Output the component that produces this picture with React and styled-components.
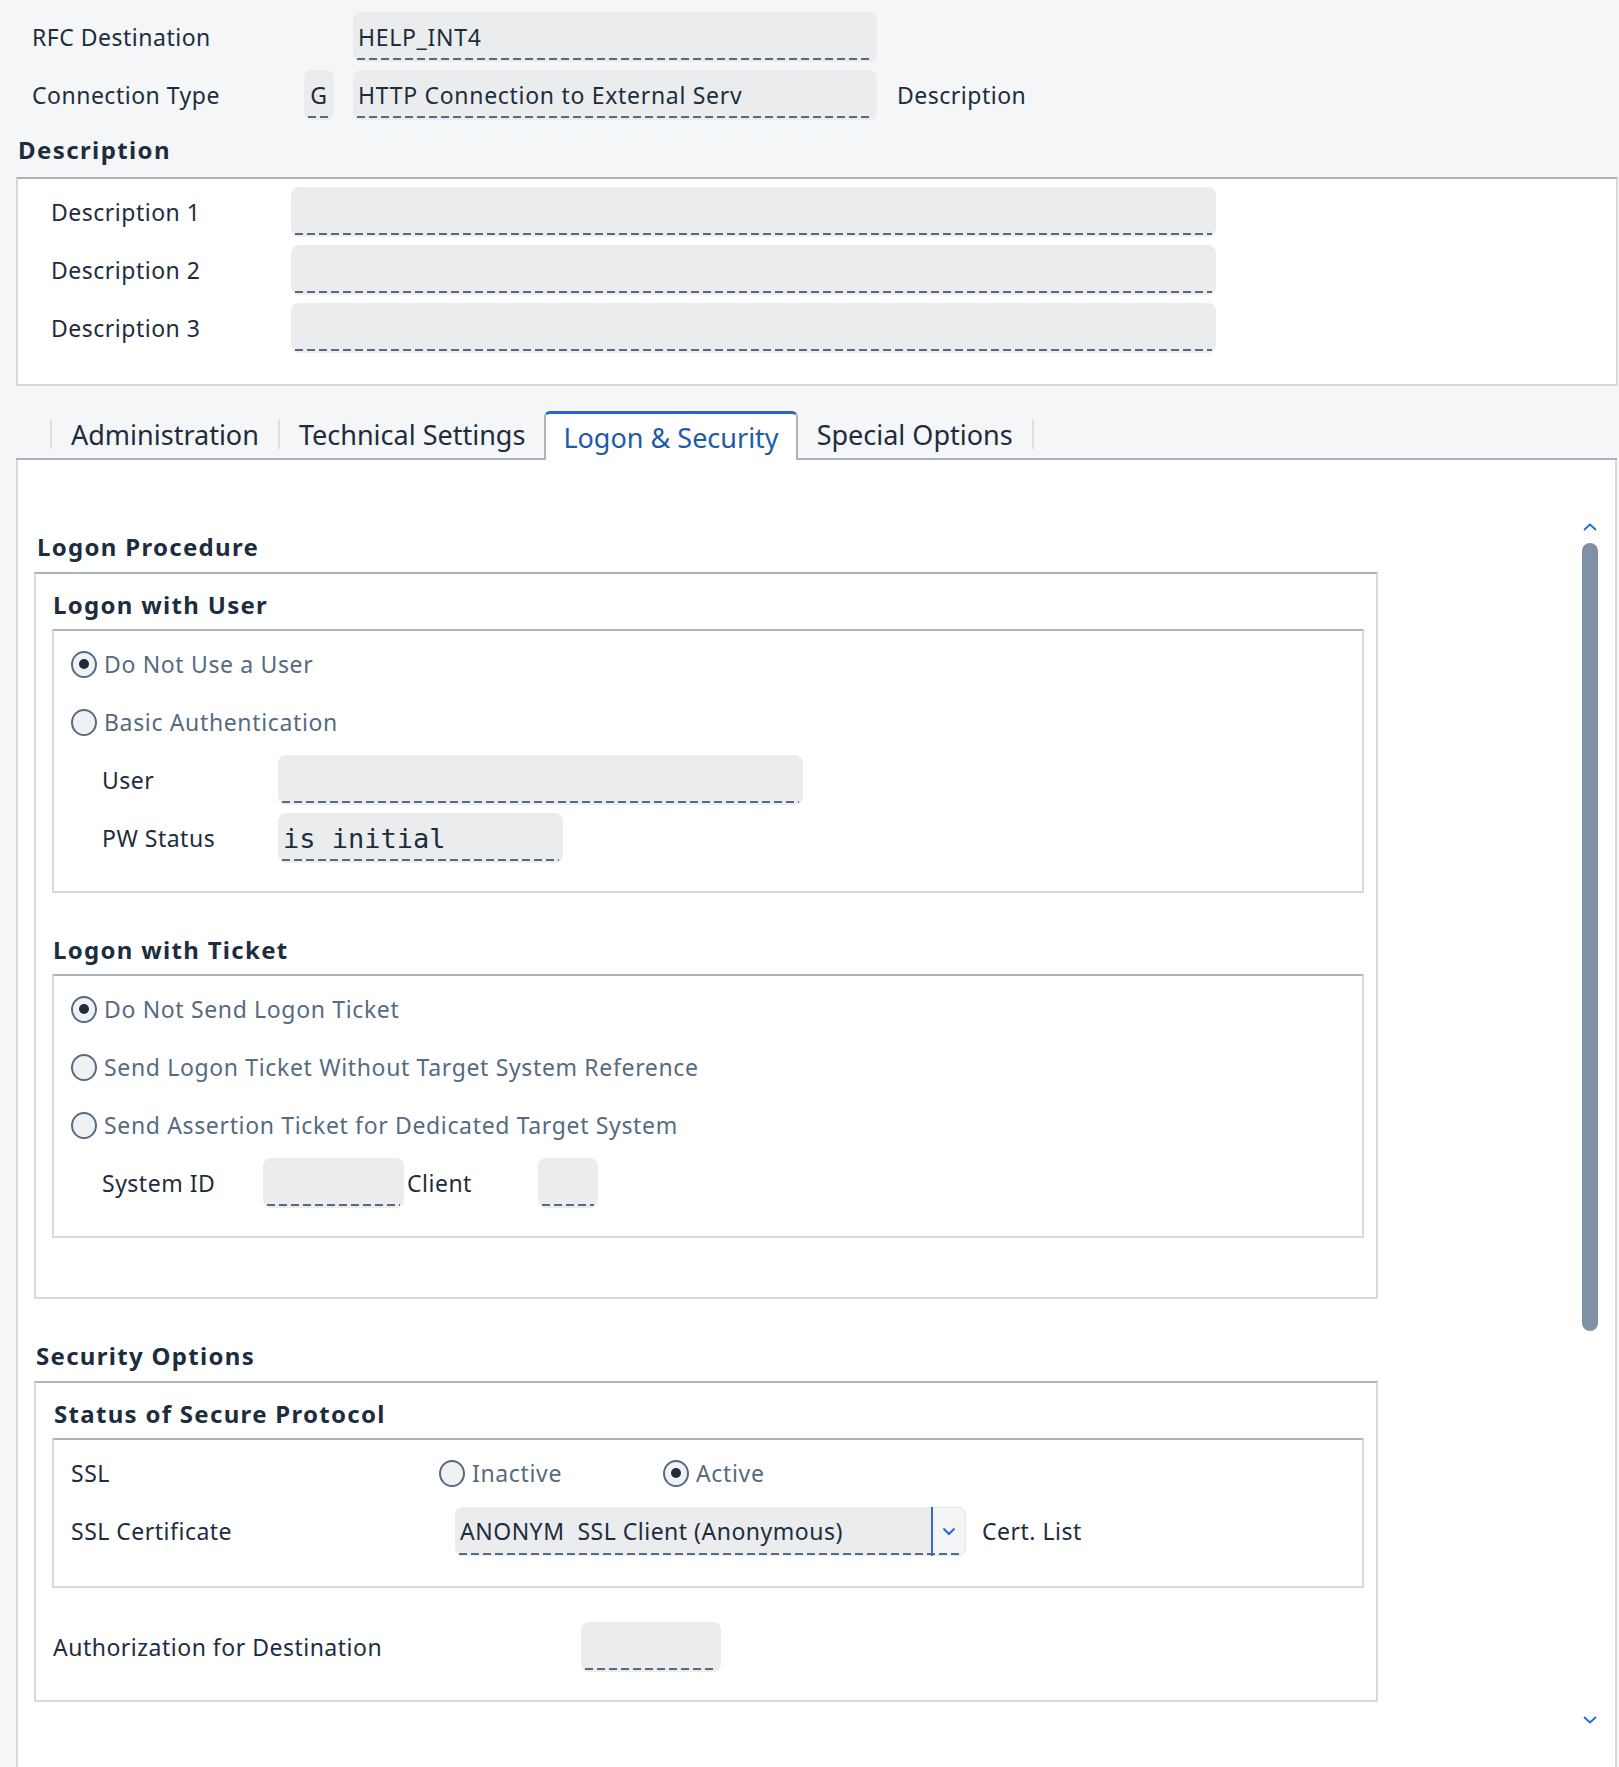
import React from 'react';
import styled, { createGlobalStyle } from 'styled-components';

const GlobalStyle = createGlobalStyle`
  body {
    margin: 0;
    background: #f5f6f7;
    font-family: "Noto Sans", "Open Sans", sans-serif;
    color: #1d2d3e;
  }
`;

const Page = styled.div`
  width: 1619px;
  min-height: 1767px;
  display: flex;
  flex-direction: column;
  box-sizing: border-box;
  padding-top: 12px;
`;

const HeaderRows = styled.div`
  display: flex;
  flex-direction: column;
  gap: 8px;
  padding-left: 32px;
`;

const Row = styled.div`
  display: flex;
  align-items: center;
  height: 50px;
  padding-left: ${p => p.$indent || 0}px;
`;

const Label = styled.div`
  width: ${p => p.$w}px;
  flex-shrink: 0;
  font-size: 23px;
  letter-spacing: 0.5px;
  white-space: nowrap;
`;

const Field = styled.div`
  position: relative;
  box-sizing: border-box;
  width: ${p => p.$w}px;
  height: ${p => p.$h || 50}px;
  flex-shrink: 0;
  background: #eaecee;
  border-radius: 8px;
  padding: 0 ${p => (p.$center ? 0 : 5)}px;
  display: flex;
  align-items: center;
  justify-content: ${p => (p.$center ? 'center' : 'flex-start')};
  font-family: ${p =>
    p.$mono ? '"DejaVu Sans Mono", "Liberation Mono", monospace' : 'inherit'};
  font-size: ${p => (p.$mono ? 27 : 23)}px;
  letter-spacing: ${p => (p.$mono ? 0 : 0.7)}px;
  white-space: pre;
  color: #1d2d3e;

  &::after {
    content: '';
    position: absolute;
    left: 4px;
    right: 4px;
    bottom: 2px;
    height: 2px;
    background: repeating-linear-gradient(
      to right,
      #556b82 0 8px,
      transparent 8px 12px
    );
  }
`;

const GSlot = styled.div`
  width: 30px;
  margin-right: 19px;
  flex-shrink: 0;
`;

const After = styled.div`
  margin-left: ${p => p.$ml || 20}px;
  font-size: 23px;
  letter-spacing: 0.5px;
`;

const SectionTitle = styled.div`
  height: 52px;
  margin-top: 3px;
  padding-left: 18px;
  display: flex;
  align-items: center;
  font-size: 24px;
  font-weight: 700;
  letter-spacing: 1.4px;
`;

const DescPanel = styled.div`
  margin: 2px 1px 0 16px;
  background: #fff;
  border: 2px solid #d9d9d9;
  border-top-color: #a9b4be;
  padding: 8px 0 31px 33px;
  display: flex;
  flex-direction: column;
  gap: 8px;
`;

const TabStrip = styled.div`
  margin: 25px 2px 0 16px;
  padding-left: 34px;
  height: 47px;
  border-bottom: 2px solid #a9b4be;
  display: flex;
  align-items: flex-end;
`;

const TabSep = styled.div`
  width: 2px;
  height: 29px;
  background: #dcdee0;
  align-self: center;
`;

const Tab = styled.div`
  box-sizing: border-box;
  height: ${p => (p.$active ? 49 : 47)}px;
  padding: 0 ${p => (p.$active ? 17 : 19)}px;
  display: flex;
  align-items: center;
  font-size: 27px;
  color: ${p => (p.$active ? '#1e5aab' : '#1d2d3e')};
  background: ${p => (p.$active ? '#fff' : 'transparent')};
  margin-bottom: ${p => (p.$active ? -2 : 0)}px;
  border: ${p => (p.$active ? '2px solid #a9b4be' : 'none')};
  border-top: ${p => (p.$active ? '3px solid #2563d0' : 'none')};
  border-bottom: none;
  border-radius: 6px 6px 0 0;
  position: relative;
`;

const TabPanel = styled.div`
  flex: 1;
  margin: 0 2px 0 16px;
  background: #fff;
  border-left: 2px solid #d9d9d9;
  border-right: 2px solid #d9d9d9;
  display: flex;
`;

const Main = styled.div`
  width: 1344px;
  padding: 60px 0 62px 16px;
`;

const Heading = styled.div`
  height: ${p => p.$h || 52}px;
  margin-top: ${p => p.$mt || 0}px;
  padding-left: ${p => p.$pl || 3}px;
  display: flex;
  align-items: center;
  font-size: 24px;
  font-weight: 700;
  letter-spacing: 1.3px;
  white-space: nowrap;
`;

const GroupBox = styled.div`
  border: 2px solid #d9d9d9;
  border-top-color: #a9b4be;
  padding: 5px 12px ${p => p.$pb}px 16px;
`;

const InnerBox = styled.div`
  border: 2px solid #d9d9d9;
  border-top-color: #a9b4be;
  padding: 8px 0 ${p => p.$pb || 28}px 17px;
  display: flex;
  flex-direction: column;
  gap: 8px;
`;

const RadioLabel = styled.label`
  display: flex;
  align-items: center;
  gap: 7px;
  font-size: 23px;
  letter-spacing: 0.65px;
  color: #556b82;
  width: ${p => (p.$w ? `${p.$w}px` : 'auto')};
  flex-shrink: 0;
`;

const RadioCircle = styled.span`
  box-sizing: border-box;
  width: 26px;
  height: 27px;
  border-radius: 50%;
  border: 2px solid #556b82;
  background: #eff1f3;
  display: flex;
  align-items: center;
  justify-content: center;
  flex-shrink: 0;

  &::before {
    content: '';
    width: 10px;
    height: 10px;
    border-radius: 50%;
    background: ${p => (p.$on ? '#1d2d3e' : 'transparent')};
  }
`;

const Radio = ({ on, children, w }) => (
  <RadioLabel $w={w}>
    <RadioCircle $on={on} />
    {children}
  </RadioLabel>
);

const Dropdown = styled.div`
  position: relative;
  width: 511px;
  height: 49px;
  display: flex;
  flex-shrink: 0;

  &::after {
    content: '';
    position: absolute;
    left: 4px;
    right: 6px;
    bottom: 1px;
    height: 2px;
    background: repeating-linear-gradient(
      to right,
      #556b82 0 8px,
      transparent 8px 12px
    );
  }
`;

const DropValue = styled.div`
  flex: 1;
  background: #eaecee;
  border-radius: 8px 0 0 8px;
  padding-left: 5px;
  display: flex;
  align-items: center;
  font-size: 23px;
  letter-spacing: 0.5px;
  white-space: pre;
  border-right: 2px solid #3a6ac0;
`;

const DropButton = styled.div`
  box-sizing: border-box;
  width: 33px;
  background: #f4f5f6;
  border: 1px solid #e4e6e8;
  border-left: none;
  border-radius: 0 8px 8px 0;
  display: flex;
  align-items: center;
  justify-content: center;
`;

const ScrollCol = styled.div`
  margin-left: auto;
  margin-right: 17px;
  width: 16px;
  padding: 63px 0 43px;
  display: flex;
  flex-direction: column;
  align-items: center;
`;

const Thumb = styled.div`
  margin-top: 12px;
  width: 16px;
  height: 788px;
  border-radius: 8px;
  background: #8090a5;
`;

const Spacer = styled.div`
  flex: 1;
`;

const Chevron = ({ up }) => (
  <svg width="14" height="8" viewBox="0 0 14 8">
    <path
      d={up ? 'M1 7 L7 1.5 L13 7' : 'M1 1 L7 6.5 L13 1'}
      fill="none"
      stroke="#1f6bd8"
      strokeWidth="1.8"
    />
  </svg>
);

const SmallChevron = () => (
  <svg width="14" height="9" viewBox="0 0 14 9">
    <path d="M1.5 1.5 L7 7 L12.5 1.5" fill="none" stroke="#1f6bd8" strokeWidth="2" />
  </svg>
);

const App = () => (
  <Page>
    <GlobalStyle />
    <HeaderRows>
      <Row>
        <Label $w={272}>RFC Destination</Label>
        <GSlot />
        <Field $w={524}>HELP_INT4</Field>
      </Row>
      <Row>
        <Label $w={272}>Connection Type</Label>
        <Field $w={30} $center style={{ marginRight: 19 }}>G</Field>
        <Field $w={524}>HTTP Connection to External Serv</Field>
        <After>Description</After>
      </Row>
    </HeaderRows>

    <SectionTitle>Description</SectionTitle>
    <DescPanel>
      {['Description 1', 'Description 2', 'Description 3'].map(d => (
        <Row key={d}>
          <Label $w={240}>{d}</Label>
          <Field $w={925} />
        </Row>
      ))}
    </DescPanel>

    <TabStrip>
      <TabSep />
      <Tab>Administration</Tab>
      <TabSep />
      <Tab>Technical Settings</Tab>
      <Tab $active>Logon &amp; Security</Tab>
      <Tab>Special Options</Tab>
      <TabSep />
    </TabStrip>

    <TabPanel>
      <Main>
        <Heading>Logon Procedure</Heading>
        <GroupBox $pb={59}>
          <Heading $h={50} $pl={1}>Logon with User</Heading>
          <InnerBox>
            <Row><Radio on>Do Not Use a User</Radio></Row>
            <Row><Radio>Basic Authentication</Radio></Row>
            <Row $indent={31}>
              <Label $w={176}>User</Label>
              <Field $w={525} />
            </Row>
            <Row $indent={31}>
              <Label $w={176}>PW Status</Label>
              <Field $w={285} $mono>is initial</Field>
            </Row>
          </InnerBox>

          <Heading $h={50} $pl={1} $mt={31}>Logon with Ticket</Heading>
          <InnerBox>
            <Row><Radio on>Do Not Send Logon Ticket</Radio></Row>
            <Row><Radio>Send Logon Ticket Without Target System Reference</Radio></Row>
            <Row><Radio>Send Assertion Ticket for Dedicated Target System</Radio></Row>
            <Row $indent={31}>
              <Label $w={161}>System ID</Label>
              <Field $w={141} />
              <Label $w={131} style={{ paddingLeft: 3 }}>Client</Label>
              <Field $w={60} />
            </Row>
          </InnerBox>
        </GroupBox>

        <Heading $mt={30} $pl={2}>Security Options</Heading>
        <GroupBox $pb={28}>
          <Heading $h={50} $pl={2}>Status of Secure Protocol</Heading>
          <InnerBox $pb={30}>
            <Row>
              <Label $w={368}>SSL</Label>
              <Radio w={224}>Inactive</Radio>
              <Radio on>Active</Radio>
            </Row>
            <Row>
              <Label $w={384}>SSL Certificate</Label>
              <Dropdown>
                <DropValue>ANONYM  SSL Client (Anonymous)</DropValue>
                <DropButton><SmallChevron /></DropButton>
              </Dropdown>
              <After $ml={16}>Cert. List</After>
            </Row>
          </InnerBox>
          <Row style={{ marginTop: 34 }} $indent={1}>
            <Label $w={528}>Authorization for Destination</Label>
            <Field $w={140} />
          </Row>
        </GroupBox>
      </Main>
      <ScrollCol>
        <Chevron up />
        <Thumb />
        <Spacer />
        <Chevron />
      </ScrollCol>
    </TabPanel>
  </Page>
);

export default App;
